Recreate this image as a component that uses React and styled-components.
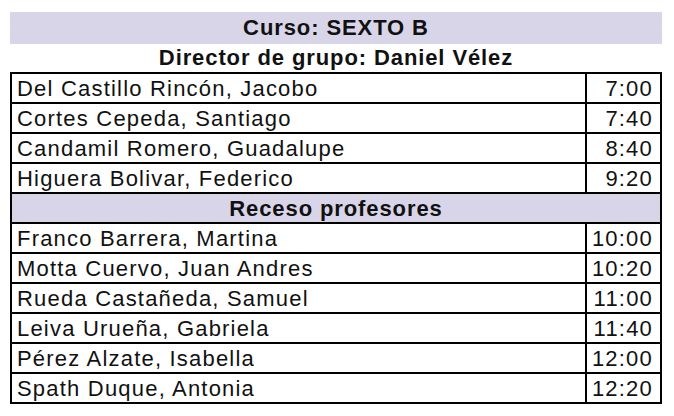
import React from 'react';
import styled, { createGlobalStyle } from 'styled-components';

const GlobalStyle = createGlobalStyle`
  body {
    margin: 0;
    background: #fff;
    font-family: "Liberation Sans", Arial, sans-serif;
    color: #111;
  }
`;

const Page = styled.div`
  width: 652px;
  padding: 12px 0 0 10px;
`;

const TitleBand = styled.div`
  height: 32px;
  background: #d9d5e9;
  display: flex;
  align-items: center;
  justify-content: center;
  font-weight: 700;
  font-size: 22px;
  letter-spacing: 0.9px;
`;

const Subtitle = styled.div`
  height: 28px;
  display: flex;
  align-items: center;
  justify-content: center;
  font-weight: 700;
  font-size: 22px;
  letter-spacing: 0.9px;
`;

const Sheet = styled.div`
  border: 2px solid #000;
`;

const Row = styled.div`
  display: grid;
  grid-template-columns: 1fr 75px;
  height: 28px;
  line-height: 29px;
  font-size: 22px;
  & + & {
    border-top: 2px solid #000;
  }
`;

const Name = styled.div`
  padding-left: 5px;
  white-space: nowrap;
  letter-spacing: 1.2px;
`;

const Time = styled.div`
  border-left: 2px solid #000;
  text-align: right;
  padding-right: 7px;
  letter-spacing: 1.2px;
`;

const Break = styled(Row)`
  grid-template-columns: 1fr;
  background: #d9d5e9;
  font-weight: 700;
  letter-spacing: 0.9px;
  text-align: center;
`;

const morning = [
  ['Del Castillo Rincón, Jacobo', '7:00'],
  ['Cortes Cepeda, Santiago', '7:40'],
  ['Candamil Romero, Guadalupe', '8:40'],
  ['Higuera Bolivar, Federico', '9:20'],
];

const late = [
  ['Franco Barrera, Martina', '10:00'],
  ['Motta Cuervo, Juan Andres', '10:20'],
  ['Rueda Castañeda, Samuel', '11:00'],
  ['Leiva Urueña, Gabriela', '11:40'],
  ['Pérez Alzate, Isabella', '12:00'],
  ['Spath Duque, Antonia', '12:20'],
];

const renderRows = (list) => list.map(([name, time]) => (
  <Row key={name}>
    <Name>{name}</Name>
    <Time>{time}</Time>
  </Row>
));

const App = () => (
  <>
    <GlobalStyle />
    <Page>
      <TitleBand>Curso: SEXTO B</TitleBand>
      <Subtitle>Director de grupo: Daniel Vélez</Subtitle>
      <Sheet>
        {renderRows(morning)}
        <Break>Receso profesores</Break>
        {renderRows(late)}
      </Sheet>
    </Page>
  </>
);

export default App;
